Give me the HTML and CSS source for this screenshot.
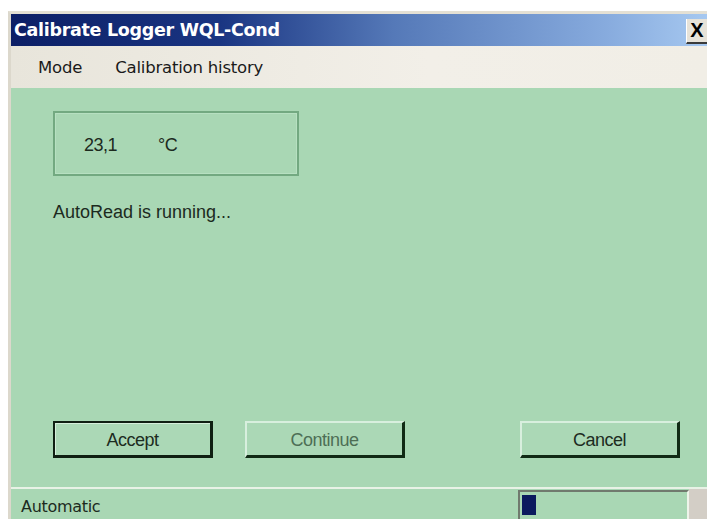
FILE: index.html
```html
<!DOCTYPE html>
<html>
<head>
<meta charset="utf-8">
<title>Calibrate Logger WQL-Cond</title>
<link rel="stylesheet" href="styles.css">
</head>
<body>
<div class="window">
  <div class="titlebar">
    <span class="title">Calibrate Logger WQL-Cond</span>
    <span class="close">X</span>
  </div>
  <div class="menubar">
    <span class="menu-item">Mode</span>
    <span class="menu-item">Calibration history</span>
  </div>
  <div class="client">
    <div class="reading">
      <span class="value">23,1</span>
      <span class="unit">°C</span>
    </div>
    <div class="status-text">AutoRead is running...</div>
    <div class="buttons">
      <button class="btn btn-default">Accept</button>
      <button class="btn btn-disabled">Continue</button>
      <button class="btn btn-cancel">Cancel</button>
    </div>
  </div>
  <div class="statusbar">
    <span class="mode">Automatic</span>
    <div class="progress"><div class="progress-fill"></div></div>
    <div class="grip"></div>
  </div>
</div>
</body>
</html>
```
FILE: styles.css
```css
html, body {
  margin: 0;
  padding: 0;
  background: #ffffff;
  height: 100%;
  overflow: hidden;
}

body {
  padding-top: 11px;
  padding-left: 8px;
  box-sizing: border-box;
  font-family: "Liberation Sans", Arial, sans-serif;
}

.window {
  height: 508px;
  display: flex;
  flex-direction: column;
  border-left: 3px solid #dcd8cc;
  border-top: 3px solid #e4e0d4;
  box-sizing: border-box;
}

.titlebar {
  height: 32px;
  flex: none;
  display: flex;
  align-items: center;
  justify-content: space-between;
  background: linear-gradient(to right, #0c1f66 0%, #1a3582 30%, #5579b8 55%, #86aadd 85%, #a6c8f0 100%);
}

.title {
  color: #ffffff;
  font-family: "DejaVu Sans", Verdana, sans-serif;
  font-weight: bold;
  font-size: 17.5px;
  letter-spacing: -0.3px;
  padding-left: 3px;
}

.close {
  width: 20px;
  height: 23px;
  margin-top: 2px;
  background: #e6e2d8;
  border-left: 1px solid #ffffff;
  border-bottom: 2px solid #3a3a3a;
  color: #000;
  font-family: "Liberation Sans", Arial, sans-serif;
  font-weight: bold;
  font-size: 20px;
  line-height: 23px;
  text-align: center;
}

.menubar {
  height: 42px;
  flex: none;
  display: flex;
  align-items: center;
  gap: 33px;
  padding-left: 27px;
  background: linear-gradient(to right, #e8e5db, #f2efe8 60%, #f1eee6);
  font-family: "DejaVu Sans", Verdana, sans-serif;
  font-size: 16.5px;
  letter-spacing: -0.2px;
  color: #1a1a1a;
}

.client {
  flex: 1;
  display: flex;
  flex-direction: column;
  background: #a9d7b4;
  padding: 23px 0 29px 42px;
  color: #1c2a1e;
  font-size: 18px;
}

.reading {
  width: 246px;
  height: 65px;
  box-sizing: border-box;
  border: 2px solid #73a981;
  box-shadow: inset 0 0 0 1px #b7e0c1;
  display: flex;
  align-items: center;
  padding-left: 29px;
  padding-top: 3px;
  gap: 41px;
  font-size: 18px;
  letter-spacing: -0.5px;
}

.status-text {
  margin-top: 26px;
}

.buttons {
  margin-top: auto;
  display: flex;
  gap: 32px;
}

.btn {
  width: 160px;
  height: 37px;
  box-sizing: border-box;
  background: #abd8b6;
  font-family: "Liberation Sans", Arial, sans-serif;
  font-size: 18px;
  letter-spacing: -0.5px;
  color: #1d2c1f;
  padding: 3px 0 0 0;
}

.btn-default {
  border: 2px solid #0f1f12;
  border-bottom-width: 3px;
  border-right-width: 3px;
  box-shadow: inset 1px 1px 0 #d6eedb;
}

.btn-disabled,
.btn-cancel {
  border-top: 2px solid #d8efde;
  border-left: 2px solid #d8efde;
  border-right: 3px solid #112a15;
  border-bottom: 3px solid #112a15;
}

.btn-disabled {
  color: #4d6e55;
}

.btn-cancel {
  margin-left: 83px;
}

.statusbar {
  height: 32px;
  flex: none;
  display: flex;
  align-items: stretch;
  background: #a9d7b4;
  border-top: 2px solid #e8f2e6;
  box-sizing: border-box;
  font-family: "DejaVu Sans", Verdana, sans-serif;
  font-size: 16px;
  color: #1c2a1e;
}

.mode {
  flex: 1;
  padding-left: 10px;
  display: flex;
  align-items: center;
  padding-top: 4px;
  letter-spacing: -0.3px;
}

.progress {
  width: 171px;
  margin-top: 1px;
  box-sizing: border-box;
  border-top: 2px solid #707a6e;
  border-left: 2px solid #707a6e;
  border-right: 2px solid #eef4ea;
  padding: 3px 2px 0 2px;
}

.progress-fill {
  width: 14px;
  height: 20px;
  background: #0b1a5e;
}

.grip {
  width: 18px;
  background: #d3cec6;
}
```
